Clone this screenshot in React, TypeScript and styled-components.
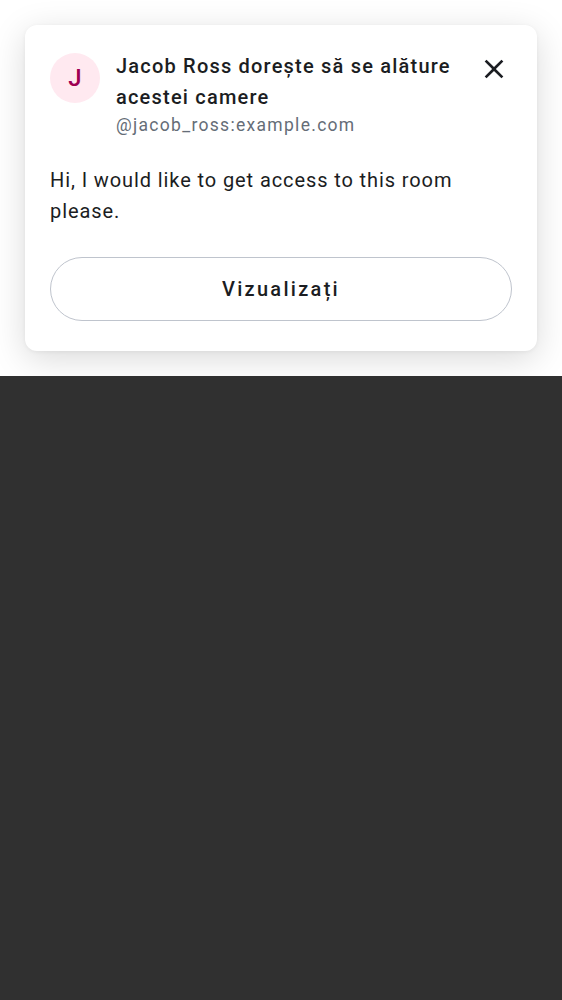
import React from "react";
import styled, { createGlobalStyle } from "styled-components";

const Global = createGlobalStyle`
  html, body { margin: 0; padding: 0; background: #303030; }
  body { font-family: Roboto, "Noto Sans", sans-serif; }
  * { box-sizing: border-box; }
`;

const Sheet = styled.div`
  background: #ffffff;
  padding: 25px;
`;

const Card = styled.div`
  background: #ffffff;
  border-radius: 12px;
  padding: 26px 25px 30px 25px;
  box-shadow: 0 8px 34px rgba(0, 0, 0, 0.15), 0 1px 4px rgba(0, 0, 0, 0.05);
  display: flex;
  flex-direction: column;
`;

const Header = styled.div`
  display: flex;
  align-items: flex-start;
  gap: 16px;
`;

const Avatar = styled.div`
  flex: none;
  width: 50px;
  height: 50px;
  margin-top: 2px;
  border-radius: 50%;
  background: #ffe9f0;
  color: #9e0052;
  display: flex;
  align-items: center;
  justify-content: center;
  font-size: 24px;
  font-weight: 500;
`;

const Texts = styled.div`
  flex: 1;
  min-width: 0;
  display: flex;
  flex-direction: column;
`;

const Title = styled.div`
  font-size: 20px;
  line-height: 31px;
  font-weight: 500;
  color: #1b1d22;
  letter-spacing: 1.2px;
`;

const Subtitle = styled.div`
  font-size: 17.5px;
  line-height: 24px;
  color: #656d77;
  letter-spacing: 1.3px;
`;

const CloseButton = styled.button`
  flex: none;
  width: 32px;
  height: 32px;
  margin-top: 2px;
  margin-right: 2px;
  padding: 0;
  border: none;
  background: transparent;
  color: #1b1d22;
  display: flex;
  align-items: center;
  justify-content: center;
`;

const Message = styled.p`
  margin: 28px 0 0 0;
  font-size: 20px;
  line-height: 31px;
  color: #1b1d22;
  letter-spacing: 0.9px;
`;

const ActionButton = styled.button`
  margin-top: 30px;
  height: 64px;
  width: 100%;
  border-radius: 32px;
  border: 1px solid #bfc4cd;
  background: #ffffff;
  color: #1b1d22;
  font-family: Roboto, "Noto Sans", sans-serif;
  font-size: 20px;
  font-weight: 500;
  letter-spacing: 2.3px;
`;

export default function App() {
  return (
    <>
      <Global />
      <Sheet>
        <Card>
          <Header>
            <Avatar>J</Avatar>
            <Texts>
              <Title>Jacob Ross dorește să se alăture acestei camere</Title>
              <Subtitle>@jacob_ross:example.com</Subtitle>
            </Texts>
            <CloseButton aria-label="Închide">
              <svg width="32" height="32" viewBox="0 0 24 24" fill="currentColor">
                <path d="M19 6.41L17.59 5 12 10.59 6.41 5 5 6.41 10.59 12 5 17.59 6.41 19 12 13.41 17.59 19 19 17.59 13.41 12z" />
              </svg>
            </CloseButton>
          </Header>
          <Message>Hi, I would like to get access to this room please.</Message>
          <ActionButton>Vizualizați</ActionButton>
        </Card>
      </Sheet>
    </>
  );
}
